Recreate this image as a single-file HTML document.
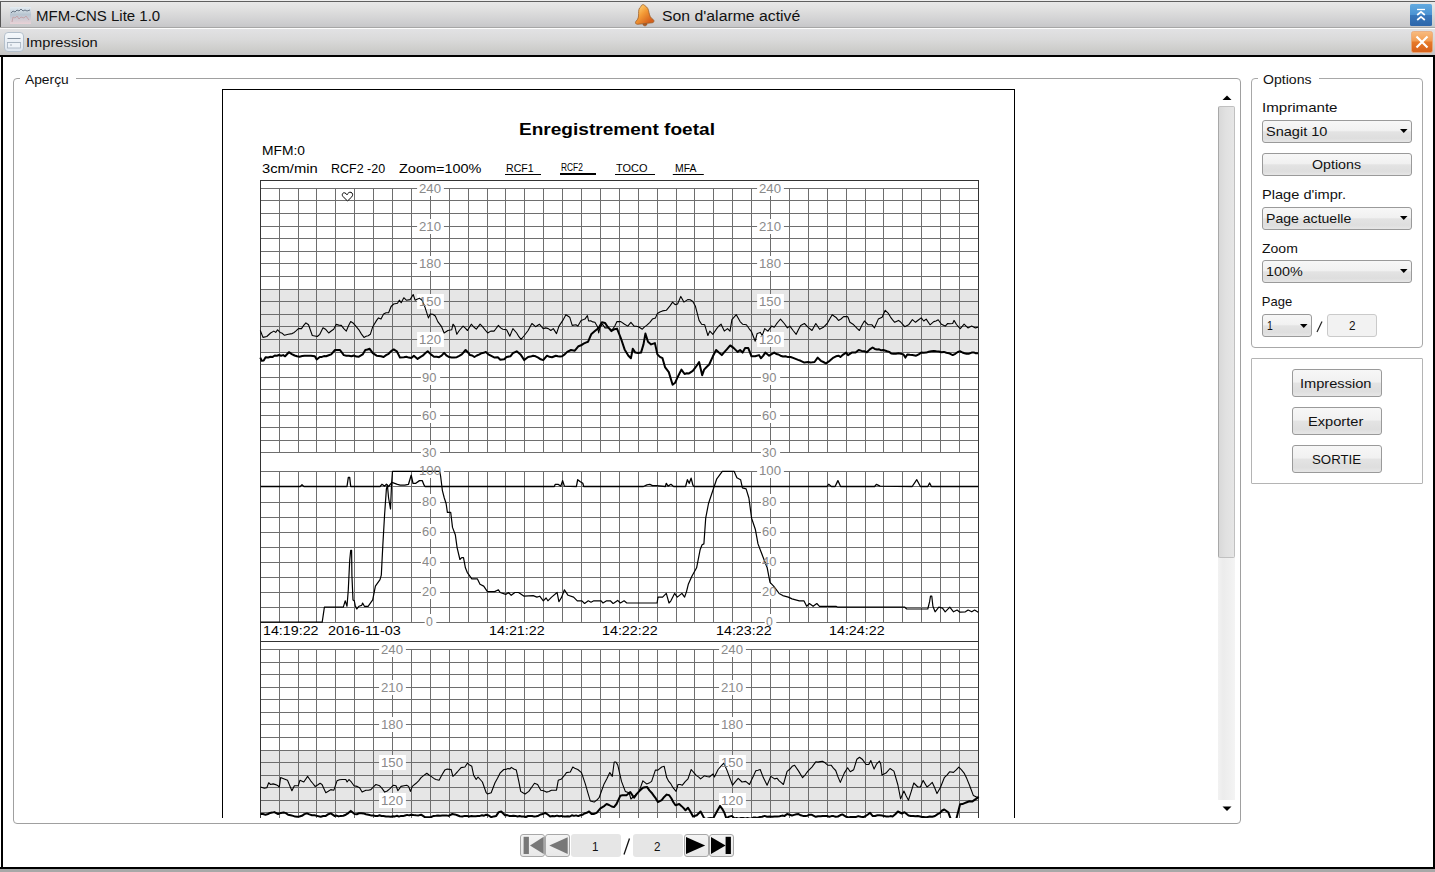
<!DOCTYPE html>
<html><head><meta charset="utf-8"><style>
html,body{margin:0;padding:0;width:1435px;height:872px;overflow:hidden;background:#fff;position:relative}
.t{position:absolute;white-space:nowrap;line-height:1;font-family:"Liberation Sans",sans-serif;transform-origin:0 0}
</style></head><body>
<div style="position:absolute;left:0;top:0;width:1435px;height:1px;background:#ededed"></div>
<div style="position:absolute;left:0;top:1px;width:1435px;height:1px;background:#5f5f5f"></div>
<div style="position:absolute;left:0;top:2px;width:1435px;height:25px;background:linear-gradient(#e8e8e8,#dedede 35%,#cdcdcf 85%,#c6c6c8)"></div>
<div style="position:absolute;left:0;top:27px;width:1435px;height:1px;background:#a6a6a6"></div>
<div style="position:absolute;left:0;top:2px;width:1px;height:25px;background:#555"></div>
<div style="position:absolute;left:0;top:28px;width:1435px;height:1px;background:#fcfcfc"></div>
<div style="position:absolute;left:0;top:29px;width:1435px;height:26px;background:linear-gradient(#e2e2e4,#dadada 40%,#cdcdcb 80%,#c4c4c6)"></div>
<div style="position:absolute;left:0;top:55px;width:1435px;height:2px;background:#000"></div>
<div style="position:absolute;left:1px;top:55px;width:2px;height:814px;background:#000"></div>
<div style="position:absolute;left:1433px;top:55px;width:2px;height:814px;background:#000"></div>
<div style="position:absolute;left:0;top:867px;width:1435px;height:2px;background:#000"></div>
<div style="position:absolute;left:0;top:869px;width:1435px;height:3px;background:#a8a8a8"></div>
<svg style="position:absolute;left:10px;top:7px" width="21" height="17" viewBox="0 0 21 17">
<defs><linearGradient id="ai" x1="0" y1="0" x2="0" y2="1"><stop offset="0" stop-color="#e4ecf2"/><stop offset="0.45" stop-color="#b7c4d0"/><stop offset="1" stop-color="#ead2d6"/></linearGradient></defs>
<rect x="0" y="0" width="21" height="17" fill="url(#ai)"/>
<path d="M1 6 L3 4 L5 5 L7 3 L9 4 L11 2 L13 4 L15 3 L17 4 L20 3" stroke="#6a7888" stroke-width="1" fill="none"/>
<path d="M2 15 L3 10 L5 11 L7 9 L9 12 L11 10 L14 11 L16 9 L19 13" stroke="#c4a4aa" stroke-width="1" fill="none"/>
</svg>
<div class="t" style="left:35.80px;top:9.15px;font-size:14.00px;font-weight:normal;color:#111;transform:scaleX(1.0716);">MFM-CNS Lite 1.0</div>
<svg style="position:absolute;left:632px;top:3px" width="24" height="25" viewBox="0 0 24 25">
<defs><linearGradient id="bg" x1="0.2" y1="0.1" x2="0.8" y2="0.9"><stop offset="0" stop-color="#ffd070"/><stop offset="0.45" stop-color="#f39a36"/><stop offset="1" stop-color="#d4601c"/></linearGradient></defs>
<g transform="rotate(-6 12 12)">
<path d="M12 1.6 C10.6 1.6 10 2.6 9.8 3.4 C7.6 4.4 7 7 6.8 10 C6.5 13.5 5.8 15.6 3.2 17.6 C2.2 18.6 2.8 20.6 4.6 20.6 L19.4 20.6 C21.2 20.6 21.8 18.6 20.8 17.6 C18.2 15.6 17.5 13.5 17.2 10 C17 7 16.4 4.4 14.2 3.4 C14 2.6 13.4 1.6 12 1.6 Z" fill="url(#bg)" stroke="#9a5a22" stroke-width="0.9" stroke-opacity="0.8"/>
<path d="M10 21 C10 23.5 14 23.5 14 21 Z" fill="#b85a20" stroke="#8a4a1a" stroke-width="0.6"/>
</g>
</svg>
<div class="t" style="left:661.70px;top:9.15px;font-size:14.00px;font-weight:normal;color:#111;transform:scaleX(1.1290);">Son d'alarme activé</div>
<svg style="position:absolute;left:1410px;top:4px" width="22" height="22" viewBox="0 0 22 22">
<defs><linearGradient id="bl" x1="0" y1="0" x2="0" y2="1"><stop offset="0" stop-color="#62aae0"/><stop offset="0.5" stop-color="#4a92d2"/><stop offset="0.5" stop-color="#3878bc"/><stop offset="1" stop-color="#2e66aa"/></linearGradient></defs>
<rect x="0" y="0" width="22" height="22" rx="1.5" fill="url(#bl)"/>
<path d="M7 5.5 L15 5.5" stroke="#fff" stroke-width="1.3"/>
<path d="M7.2 11 L11 7.8 L14.8 11" stroke="#fff" stroke-width="1.7" fill="none"/>
<path d="M7.2 16 L11 12.8 L14.8 16" stroke="#fff" stroke-width="1.7" fill="none"/>
</svg>
<svg style="position:absolute;left:4px;top:32px" width="20" height="20" viewBox="0 0 20 20">
<defs><linearGradient id="pi" x1="0" y1="0" x2="0" y2="1"><stop offset="0" stop-color="#f6f9fc"/><stop offset="1" stop-color="#dde5ee"/></linearGradient></defs>
<rect x="0.5" y="0.5" width="19" height="19" rx="3.5" fill="url(#pi)" stroke="#b4c0cc"/>
<path d="M3.5 6.5 L16.5 6.5 M3.5 10.5 L16.5 10.5" stroke="#8894a2" stroke-width="1"/>
<rect x="3.5" y="10.5" width="13" height="5.5" fill="#eef3f8" stroke="#a4b0be" stroke-width="0.8"/>
<circle cx="7" cy="13" r="0.7" fill="#8894a2"/>
</svg>
<div class="t" style="left:26.40px;top:36.00px;font-size:13.00px;font-weight:normal;color:#111;transform:scaleX(1.1274);">Impression</div>
<svg style="position:absolute;left:1411px;top:31px" width="22" height="22" viewBox="0 0 22 22">
<defs><linearGradient id="or" x1="0" y1="0" x2="0" y2="1"><stop offset="0" stop-color="#f8bc80"/><stop offset="0.45" stop-color="#f29c52"/><stop offset="0.5" stop-color="#e67a2a"/><stop offset="1" stop-color="#d6601a"/></linearGradient></defs>
<rect x="0.5" y="0.5" width="21" height="21" rx="2" fill="url(#or)" stroke="#eaa878" stroke-width="0.8"/>
<path d="M5.5 5.5 L16.5 16.5 M16.5 5.5 L5.5 16.5" stroke="#fff" stroke-width="2.2"/>
</svg>
<div style="position:absolute;left:13px;top:78px;width:1226px;height:744px;border:1px solid #a0a0a0;border-radius:4px"></div>
<div style="position:absolute;left:20px;top:74px;width:56px;height:10px;background:#fff"></div>
<div class="t" style="left:24.50px;top:73.00px;font-size:13.00px;font-weight:normal;color:#111;transform:scaleX(1.0607);">Aperçu</div>
<div style="position:absolute;left:1251px;top:78px;width:170px;height:268px;border:1px solid #a8a8a8;border-radius:4px"></div>
<div style="position:absolute;left:1258px;top:74px;width:61px;height:10px;background:#fff"></div>
<div class="t" style="left:1262.90px;top:73.00px;font-size:13.00px;font-weight:normal;color:#111;transform:scaleX(1.0826);">Options</div>
<div style="position:absolute;left:1251px;top:358px;width:170px;height:124px;border:1px solid #b4b4b4;border-radius:1px"></div>
<div class="t" style="left:1261.70px;top:101.00px;font-size:13.00px;font-weight:normal;color:#111;transform:scaleX(1.1615);">Imprimante</div>
<div style="position:absolute;left:1262px;top:120px;width:148px;height:21px;border:1px solid #9a9a9a;border-radius:3px;background:linear-gradient(#f7f7f7,#f1f1f1 45%,#e3e3e3 52%,#dedede 82%,#e6e6e6)"></div>
<svg style="position:absolute;left:1400.0px;top:129px" width="8" height="5"><path d="M0 0 L7.5 0 L3.75 4 Z" fill="#000"/></svg>
<div class="t" style="left:1265.60px;top:125.00px;font-size:13.00px;font-weight:normal;color:#111;transform:scaleX(1.1184);">Snagit 10</div>
<div style="position:absolute;left:1262px;top:153px;width:148px;height:21px;border:1px solid #9a9a9a;border-radius:3px;background:linear-gradient(#f7f7f7,#f1f1f1 45%,#e3e3e3 52%,#dedede 82%,#e6e6e6)"></div>
<div class="t" style="left:1311.70px;top:158.00px;font-size:13.00px;font-weight:normal;color:#111;transform:scaleX(1.0938);">Options</div>
<div class="t" style="left:1261.60px;top:188.00px;font-size:13.00px;font-weight:normal;color:#111;transform:scaleX(1.1232);">Plage d'impr.</div>
<div style="position:absolute;left:1262px;top:207px;width:148px;height:21px;border:1px solid #9a9a9a;border-radius:3px;background:linear-gradient(#f7f7f7,#f1f1f1 45%,#e3e3e3 52%,#dedede 82%,#e6e6e6)"></div>
<svg style="position:absolute;left:1400.0px;top:216px" width="8" height="5"><path d="M0 0 L7.5 0 L3.75 4 Z" fill="#000"/></svg>
<div class="t" style="left:1265.80px;top:212.00px;font-size:13.00px;font-weight:normal;color:#111;transform:scaleX(1.0825);">Page actuelle</div>
<div class="t" style="left:1261.80px;top:242.00px;font-size:13.00px;font-weight:normal;color:#111;transform:scaleX(1.0783);">Zoom</div>
<div style="position:absolute;left:1262px;top:260px;width:148px;height:21px;border:1px solid #9a9a9a;border-radius:3px;background:linear-gradient(#f7f7f7,#f1f1f1 45%,#e3e3e3 52%,#dedede 82%,#e6e6e6)"></div>
<svg style="position:absolute;left:1400.0px;top:269px" width="8" height="5"><path d="M0 0 L7.5 0 L3.75 4 Z" fill="#000"/></svg>
<div class="t" style="left:1266.30px;top:265.00px;font-size:13.00px;font-weight:normal;color:#111;transform:scaleX(1.1024);">100%</div>
<div class="t" style="left:1261.80px;top:295.00px;font-size:13.00px;font-weight:normal;color:#111;transform:scaleX(1.0000);">Page</div>
<div style="position:absolute;left:1262px;top:314px;width:48px;height:21px;border:1px solid #9a9a9a;border-radius:3px;background:linear-gradient(#f7f7f7,#f1f1f1 45%,#e3e3e3 52%,#dedede 82%,#e6e6e6)"></div>
<svg style="position:absolute;left:1300.0px;top:323.5px" width="8" height="5"><path d="M0 0 L7.5 0 L3.75 4 Z" fill="#000"/></svg>
<div class="t" style="left:1266.50px;top:319.00px;font-size:13.00px;font-weight:normal;color:#111;transform:scaleX(0.8056);">1</div>
<svg style="position:absolute;left:1314px;top:319px" width="10" height="15"><path d="M8 2.5 L3 13" stroke="#222" stroke-width="1.2"/></svg>
<div style="position:absolute;left:1327px;top:314px;width:48px;height:21px;border:1px solid #cacaca;border-radius:3px;background:#f2f2f2"></div>
<div class="t" style="left:1348.70px;top:319.00px;font-size:13.00px;font-weight:normal;color:#111;transform:scaleX(0.9028);">2</div>
<div style="position:absolute;left:1292px;top:369px;width:88px;height:26px;border:1px solid #9a9a9a;border-radius:3px;background:linear-gradient(#f7f7f7,#f1f1f1 45%,#e3e3e3 52%,#dedede 82%,#e6e6e6)"></div>
<div class="t" style="left:1300.20px;top:377.00px;font-size:13.00px;font-weight:normal;color:#111;transform:scaleX(1.1242);">Impression</div>
<div style="position:absolute;left:1292px;top:407px;width:88px;height:26px;border:1px solid #9a9a9a;border-radius:3px;background:linear-gradient(#f7f7f7,#f1f1f1 45%,#e3e3e3 52%,#dedede 82%,#e6e6e6)"></div>
<div class="t" style="left:1308.40px;top:415.00px;font-size:13.00px;font-weight:normal;color:#111;transform:scaleX(1.1263);">Exporter</div>
<div style="position:absolute;left:1292px;top:445px;width:88px;height:26px;border:1px solid #9a9a9a;border-radius:3px;background:linear-gradient(#f7f7f7,#f1f1f1 45%,#e3e3e3 52%,#dedede 82%,#e6e6e6)"></div>
<div class="t" style="left:1311.60px;top:453.00px;font-size:13.00px;font-weight:normal;color:#111;transform:scaleX(1.0207);">SORTIE</div>
<svg style="position:absolute;left:1222px;top:95px" width="10" height="6"><path d="M0.5 5 L9.5 5 L5 0.5 Z" fill="#000"/></svg>
<div style="position:absolute;left:1218px;top:557px;width:17px;height:243px;background:linear-gradient(90deg,#f2f2f2,#ececec 30%,#f0f0f0 70%,#f4f4f4)"></div>
<div style="position:absolute;left:1218px;top:106px;width:15px;height:450px;border:1px solid #c0c0c0;border-left-color:#a8a8a8;border-radius:2px;background:linear-gradient(90deg,#d8d8d8,#e0e0e0 40%,#e6e6e6)"></div>
<svg style="position:absolute;left:1222px;top:806px" width="10" height="6"><path d="M0.5 0.5 L9.5 0.5 L5 5 Z" fill="#000"/></svg>
<div style="position:absolute;left:520px;top:834px;width:23px;height:21px;border:1px solid #a8a8a8;border-radius:3px;background:linear-gradient(#f4f4f4,#e8e8e8)"></div>
<div style="position:absolute;left:545px;top:834px;width:23px;height:21px;border:1px solid #a8a8a8;border-radius:3px;background:linear-gradient(#f4f4f4,#e8e8e8)"></div>
<div style="position:absolute;left:684px;top:834px;width:23px;height:21px;border:1px solid #a8a8a8;border-radius:3px;background:linear-gradient(#f4f4f4,#e8e8e8)"></div>
<div style="position:absolute;left:709px;top:834px;width:23px;height:21px;border:1px solid #a8a8a8;border-radius:3px;background:linear-gradient(#f4f4f4,#e8e8e8)"></div>
<div style="position:absolute;left:571px;top:834px;width:50px;height:23px;border-radius:3px;background:#e6e6e6"></div>
<div style="position:absolute;left:633px;top:834px;width:50px;height:23px;border-radius:3px;background:#e6e6e6"></div>
<svg style="position:absolute;left:520px;top:834px" width="215" height="23" viewBox="520 834 215 23"><rect x="523.6" y="836.8" width="5.3" height="17.2" fill="#787878"/><path d="M543.7 836.8 L530 845.4 L543.7 854 Z" fill="#787878"/><path d="M567.7 837.3 L549.3 845.6 L567.7 854 Z" fill="#787878"/><path d="M686 837 L705.2 845.5 L686 854 Z" fill="#000"/><path d="M711 837 L725.6 845.5 L711 854 Z" fill="#000"/><rect x="725.6" y="836.8" width="5.3" height="17.2" fill="#000"/></svg>
<div class="t" style="left:591.50px;top:840.84px;font-size:12.00px;font-weight:normal;color:#111;transform:scaleX(0.9701);">1</div>
<svg style="position:absolute;left:620px;top:836px" width="14" height="20"><path d="M9.5 2.5 L4 18.5" stroke="#111" stroke-width="1.3"/></svg>
<div class="t" style="left:654.00px;top:840.84px;font-size:12.00px;font-weight:normal;color:#111;transform:scaleX(0.9701);">2</div>
<div style="position:absolute;left:222px;top:89px;width:791px;height:728px;border:1px solid #000;border-bottom:none;background:#fff"></div>
<div class="t" style="left:519.40px;top:121.03px;font-size:16.50px;font-weight:bold;color:#000;transform:scaleX(1.1551);">Enregistrement foetal</div>
<div class="t" style="left:261.70px;top:144.00px;font-size:13.00px;font-weight:normal;color:#000;transform:scaleX(1.0619);">MFM:0</div>
<div class="t" style="left:261.70px;top:162.00px;font-size:13.00px;font-weight:normal;color:#000;transform:scaleX(1.1324);">3cm/min</div>
<div class="t" style="left:330.70px;top:162.00px;font-size:13.00px;font-weight:normal;color:#000;transform:scaleX(0.9609);">RCF2 -20</div>
<div class="t" style="left:398.60px;top:162.00px;font-size:13.00px;font-weight:normal;color:#000;transform:scaleX(1.1134);">Zoom=100%</div>
<div class="t" style="left:505.50px;top:162.86px;font-size:10.80px;font-weight:normal;color:#000;transform:scaleX(0.9787);">RCF1</div>
<div class="t" style="left:560.70px;top:162.53px;font-size:10.00px;font-weight:normal;color:#000;transform:scaleX(0.8391);">RCF2</div>
<div class="t" style="left:615.90px;top:162.86px;font-size:10.80px;font-weight:normal;color:#000;transform:scaleX(1.0129);">TOCO</div>
<div class="t" style="left:674.60px;top:162.86px;font-size:10.80px;font-weight:normal;color:#000;transform:scaleX(0.9640);">MFA</div>
<svg style="position:absolute;left:0;top:0" width="1435" height="818" viewBox="0 0 1435 818">
<path d="M505 174.5 L541 174.5 M615 174.5 L655 174.5 M672.8 174.5 L703.8 174.5" stroke="#000" stroke-width="1"/>
<path d="M560 174 L596 174" stroke="#000" stroke-width="2"/>
<rect x="261" y="289.5" width="717" height="63.0" fill="#e6e6e6"/>
<rect x="261" y="750.5" width="717" height="62.0" fill="#e6e6e6"/>
<path d="M260 188.5 L978 188.5 M260 200.5 L978 200.5 M260 213.5 L978 213.5 M260 226.5 L978 226.5 M260 238.5 L978 238.5 M260 251.5 L978 251.5 M260 263.5 L978 263.5 M260 276.5 L978 276.5 M260 289.5 L978 289.5 M260 301.5 L978 301.5 M260 314.5 L978 314.5 M260 326.5 L978 326.5 M260 339.5 L978 339.5 M260 352.5 L978 352.5 M260 364.5 L978 364.5 M260 377.5 L978 377.5 M260 389.5 L978 389.5 M260 402.5 L978 402.5 M260 415.5 L978 415.5 M260 427.5 L978 427.5 M260 440.5 L978 440.5 M260 452.5 L978 452.5 M279.5 188.5 L279.5 452.5 M298.5 188.5 L298.5 452.5 M316.5 188.5 L316.5 452.5 M335.5 188.5 L335.5 452.5 M354.5 188.5 L354.5 452.5 M373.5 188.5 L373.5 452.5 M392.5 188.5 L392.5 452.5 M411.5 188.5 L411.5 452.5 M430.5 188.5 L430.5 452.5 M449.5 188.5 L449.5 452.5 M468.5 188.5 L468.5 452.5 M487.5 188.5 L487.5 452.5 M505.5 188.5 L505.5 452.5 M524.5 188.5 L524.5 452.5 M543.5 188.5 L543.5 452.5 M562.5 188.5 L562.5 452.5 M581.5 188.5 L581.5 452.5 M600.5 188.5 L600.5 452.5 M619.5 188.5 L619.5 452.5 M638.5 188.5 L638.5 452.5 M657.5 188.5 L657.5 452.5 M676.5 188.5 L676.5 452.5 M694.5 188.5 L694.5 452.5 M713.5 188.5 L713.5 452.5 M732.5 188.5 L732.5 452.5 M751.5 188.5 L751.5 452.5 M770.5 188.5 L770.5 452.5 M789.5 188.5 L789.5 452.5 M808.5 188.5 L808.5 452.5 M827.5 188.5 L827.5 452.5 M846.5 188.5 L846.5 452.5 M865.5 188.5 L865.5 452.5 M883.5 188.5 L883.5 452.5 M902.5 188.5 L902.5 452.5 M921.5 188.5 L921.5 452.5 M940.5 188.5 L940.5 452.5 M959.5 188.5 L959.5 452.5 M260 471.5 L978 471.5 M260 486.5 L978 486.5 M260 502.5 L978 502.5 M260 517.5 L978 517.5 M260 532.5 L978 532.5 M260 547.5 L978 547.5 M260 562.5 L978 562.5 M260 577.5 L978 577.5 M260 592.5 L978 592.5 M260 607.5 L978 607.5 M260 622.5 L978 622.5 M279.5 471.5 L279.5 622.5 M298.5 471.5 L298.5 622.5 M316.5 471.5 L316.5 622.5 M335.5 471.5 L335.5 622.5 M354.5 471.5 L354.5 622.5 M373.5 471.5 L373.5 622.5 M392.5 471.5 L392.5 622.5 M411.5 471.5 L411.5 622.5 M430.5 471.5 L430.5 622.5 M449.5 471.5 L449.5 622.5 M468.5 471.5 L468.5 622.5 M487.5 471.5 L487.5 622.5 M505.5 471.5 L505.5 622.5 M524.5 471.5 L524.5 622.5 M543.5 471.5 L543.5 622.5 M562.5 471.5 L562.5 622.5 M581.5 471.5 L581.5 622.5 M600.5 471.5 L600.5 622.5 M619.5 471.5 L619.5 622.5 M638.5 471.5 L638.5 622.5 M657.5 471.5 L657.5 622.5 M676.5 471.5 L676.5 622.5 M694.5 471.5 L694.5 622.5 M713.5 471.5 L713.5 622.5 M732.5 471.5 L732.5 622.5 M751.5 471.5 L751.5 622.5 M770.5 471.5 L770.5 622.5 M789.5 471.5 L789.5 622.5 M808.5 471.5 L808.5 622.5 M827.5 471.5 L827.5 622.5 M846.5 471.5 L846.5 622.5 M865.5 471.5 L865.5 622.5 M883.5 471.5 L883.5 622.5 M902.5 471.5 L902.5 622.5 M921.5 471.5 L921.5 622.5 M940.5 471.5 L940.5 622.5 M959.5 471.5 L959.5 622.5 M260 649.5 L978 649.5 M260 662.5 L978 662.5 M260 674.5 L978 674.5 M260 687.5 L978 687.5 M260 699.5 L978 699.5 M260 712.5 L978 712.5 M260 724.5 L978 724.5 M260 737.5 L978 737.5 M260 750.5 L978 750.5 M260 762.5 L978 762.5 M260 775.5 L978 775.5 M260 787.5 L978 787.5 M260 800.5 L978 800.5 M260 812.5 L978 812.5 M279.5 649.5 L279.5 818 M298.5 649.5 L298.5 818 M316.5 649.5 L316.5 818 M335.5 649.5 L335.5 818 M354.5 649.5 L354.5 818 M373.5 649.5 L373.5 818 M392.5 649.5 L392.5 818 M411.5 649.5 L411.5 818 M430.5 649.5 L430.5 818 M449.5 649.5 L449.5 818 M468.5 649.5 L468.5 818 M487.5 649.5 L487.5 818 M505.5 649.5 L505.5 818 M524.5 649.5 L524.5 818 M543.5 649.5 L543.5 818 M562.5 649.5 L562.5 818 M581.5 649.5 L581.5 818 M600.5 649.5 L600.5 818 M619.5 649.5 L619.5 818 M638.5 649.5 L638.5 818 M657.5 649.5 L657.5 818 M676.5 649.5 L676.5 818 M694.5 649.5 L694.5 818 M713.5 649.5 L713.5 818 M732.5 649.5 L732.5 818 M751.5 649.5 L751.5 818 M770.5 649.5 L770.5 818 M789.5 649.5 L789.5 818 M808.5 649.5 L808.5 818 M827.5 649.5 L827.5 818 M846.5 649.5 L846.5 818 M865.5 649.5 L865.5 818 M883.5 649.5 L883.5 818 M902.5 649.5 L902.5 818 M921.5 649.5 L921.5 818 M940.5 649.5 L940.5 818 M959.5 649.5 L959.5 818" stroke="#6e6e6e" stroke-width="1" fill="none"/>
<path d="M260.5 180 L260.5 818 M978.5 180 L978.5 818 M260 180.5 L979 180.5 M260 641.5 L979 641.5" stroke="#333" stroke-width="1" fill="none"/>
<rect x="417.1" y="181.0" width="26.8" height="15" fill="#fff"/>
<rect x="757.1" y="181.0" width="26.8" height="15" fill="#fff"/>
<rect x="417.1" y="219.0" width="26.8" height="15" fill="#fff"/>
<rect x="757.1" y="219.0" width="26.8" height="15" fill="#fff"/>
<rect x="417.1" y="256.0" width="26.8" height="15" fill="#fff"/>
<rect x="757.1" y="256.0" width="26.8" height="15" fill="#fff"/>
<rect x="417.1" y="294.0" width="26.8" height="15" fill="#fff"/>
<rect x="757.1" y="294.0" width="26.8" height="15" fill="#fff"/>
<rect x="417.1" y="332.0" width="26.8" height="15" fill="#fff"/>
<rect x="757.1" y="332.0" width="26.8" height="15" fill="#fff"/>
<rect x="420.9" y="370.0" width="19.2" height="15" fill="#fff"/>
<rect x="760.9" y="370.0" width="19.2" height="15" fill="#fff"/>
<rect x="420.9" y="408.0" width="19.2" height="15" fill="#fff"/>
<rect x="760.9" y="408.0" width="19.2" height="15" fill="#fff"/>
<rect x="420.9" y="445.0" width="19.2" height="15" fill="#fff"/>
<rect x="760.9" y="445.0" width="19.2" height="15" fill="#fff"/>
<rect x="417.1" y="463.0" width="26.8" height="15" fill="#fff"/>
<rect x="757.1" y="463.0" width="26.8" height="15" fill="#fff"/>
<rect x="420.9" y="494.0" width="19.2" height="15" fill="#fff"/>
<rect x="760.9" y="494.0" width="19.2" height="15" fill="#fff"/>
<rect x="420.9" y="524.0" width="19.2" height="15" fill="#fff"/>
<rect x="760.9" y="524.0" width="19.2" height="15" fill="#fff"/>
<rect x="420.9" y="554.0" width="19.2" height="15" fill="#fff"/>
<rect x="760.9" y="554.0" width="19.2" height="15" fill="#fff"/>
<rect x="420.9" y="584.0" width="19.2" height="15" fill="#fff"/>
<rect x="760.9" y="584.0" width="19.2" height="15" fill="#fff"/>
<rect x="424.7" y="614.0" width="11.6" height="15" fill="#fff"/>
<rect x="764.7" y="614.0" width="11.6" height="15" fill="#fff"/>
<rect x="379.1" y="642.0" width="26.8" height="15" fill="#fff"/>
<rect x="719.1" y="642.0" width="26.8" height="15" fill="#fff"/>
<rect x="379.1" y="680.0" width="26.8" height="15" fill="#fff"/>
<rect x="719.1" y="680.0" width="26.8" height="15" fill="#fff"/>
<rect x="379.1" y="717.0" width="26.8" height="15" fill="#fff"/>
<rect x="719.1" y="717.0" width="26.8" height="15" fill="#fff"/>
<rect x="379.1" y="755.0" width="26.8" height="15" fill="#fff"/>
<rect x="719.1" y="755.0" width="26.8" height="15" fill="#fff"/>
<rect x="379.1" y="793.0" width="26.8" height="15" fill="#fff"/>
<rect x="719.1" y="793.0" width="26.8" height="15" fill="#fff"/>
<path d="M260.3 330.5 L263.0 337.4 L266.8 336.5 L270.6 333.0 L273.8 331.1 L275.7 332.4 L277.6 329.8 L280.1 332.4 L282.3 333.3 L284.5 335.3 L288.3 334.3 L292.1 333.6 L294.2 332.4 L296.3 330.6 L298.4 328.6 L301.5 328.6 L303.7 325.4 L305.9 322.9 L308.5 324.8 L312.3 335.5 L314.8 336.0 L317.3 336.5 L319.8 334.3 L323.0 327.7 L325.5 329.2 L328.7 333.0 L331.2 331.0 L333.7 329.2 L336.2 324.4 L338.8 325.1 L341.3 325.4 L343.8 328.7 L346.3 331.1 L348.5 325.8 L350.7 321.6 L353.0 322.9 L355.2 325.4 L358.9 329.8 L361.5 334.1 L364.0 337.4 L366.1 336.3 L368.2 335.7 L370.3 334.3 L372.8 326.7 L376.6 320.4 L378.5 317.9 L381.0 319.1 L383.6 314.1 L386.1 312.8 L388.6 312.8 L391.1 306.5 L393.7 304.0 L397.5 303.3 L399.3 300.2 L401.2 302.7 L403.8 297.7 L406.3 300.2 L410.1 299.6 L413.2 294.5 L415.1 300.2 L417.6 298.9 L419.5 298.3 L422.1 300.2 L425.2 307.8 L428.4 317.9 L430.3 314.1 L432.8 314.3 L435.3 316.0 L437.8 321.6 L441.6 326.7 L444.1 333.0 L447.9 330.5 L451.7 329.8 L453.0 324.2 L454.9 326.7 L456.8 334.3 L459.3 330.5 L463.1 326.1 L465.3 328.2 L467.5 330.5 L471.3 324.2 L473.8 327.0 L476.3 329.2 L480.1 324.2 L482.3 326.3 L484.5 329.2 L487.7 333.0 L490.8 331.1 L494.0 331.1 L494.6 330.5 L498.4 325.4 L500.6 327.9 L502.8 329.2 L506.6 329.8 L509.8 336.2 L512.9 328.6 L516.7 333.0 L518.9 336.7 L521.1 339.3 L524.3 335.5 L528.1 330.5 L531.9 323.5 L535.6 326.7 L539.4 324.2 L543.2 328.6 L545.7 327.9 L548.3 328.6 L550.8 330.5 L553.3 328.6 L556.5 333.6 L559.0 326.1 L562.8 320.4 L565.9 314.7 L569.7 317.2 L572.2 325.4 L576.0 324.8 L577.9 326.1 L581.1 320.4 L584.9 319.1 L587.4 315.6 L588.6 321.0 L590.7 320.8 L592.8 321.9 L594.9 322.3 L597.5 326.7 L598.7 333.0 L600.0 327.3 L602.5 324.2 L605.0 327.9 L608.8 327.9 L612.0 330.5 L612.6 329.2 L614.8 326.0 L617.0 321.6 L620.8 321.6 L624.6 324.2 L627.8 326.1 L630.9 322.3 L634.1 326.1 L636.3 326.2 L638.5 326.7 L642.3 329.2 L644.5 326.9 L646.7 325.4 L649.9 322.3 L652.4 319.1 L655.5 317.9 L657.4 313.4 L659.9 312.1 L662.5 310.9 L666.3 310.3 L670.0 305.9 L672.6 302.1 L675.1 304.6 L677.6 304.0 L680.8 296.4 L683.9 302.1 L687.7 299.6 L690.2 299.8 L692.8 301.5 L695.3 305.9 L699.1 320.4 L701.6 324.2 L704.7 324.8 L707.9 335.5 L709.8 331.1 L712.9 334.3 L716.7 328.6 L718.9 326.0 L721.1 324.2 L724.3 331.1 L727.5 328.6 L730.0 331.1 L731.9 319.7 L734.1 317.1 L736.3 314.7 L740.1 321.6 L742.6 324.2 L746.4 324.8 L748.9 328.3 L751.5 331.7 L755.2 341.2 L757.1 333.6 L760.3 332.4 L762.2 335.5 L764.7 328.6 L767.9 331.1 L771.6 326.1 L774.2 327.3 L776.3 324.2 L778.4 321.5 L780.5 319.1 L784.3 323.5 L787.4 327.9 L789.9 326.1 L793.1 330.5 L796.2 334.3 L798.5 329.4 L800.7 325.4 L804.4 323.5 L808.2 327.3 L812.0 330.5 L815.8 323.5 L819.6 329.2 L823.4 327.3 L827.2 323.5 L829.7 319.1 L832.2 314.7 L834.3 316.3 L836.4 317.8 L838.5 320.4 L841.0 319.0 L843.6 316.6 L847.4 316.6 L848.0 317.2 L849.9 322.3 L853.0 324.2 L855.2 326.3 L857.3 328.6 L859.4 330.5 L861.9 325.3 L864.4 321.0 L868.2 324.8 L872.0 324.8 L874.5 327.9 L878.3 319.1 L882.1 317.2 L885.2 310.3 L888.4 313.4 L890.5 317.1 L892.6 319.8 L894.7 322.3 L898.5 320.4 L900.6 322.0 L902.7 324.4 L904.8 326.7 L908.6 324.8 L912.4 319.7 L915.5 322.3 L918.7 319.7 L921.2 317.9 L923.7 321.0 L926.2 319.1 L930.0 324.8 L933.8 321.6 L936.0 321.0 L938.2 319.7 L941.4 324.2 L945.2 326.1 L947.7 323.5 L950.2 323.8 L952.7 323.5 L954.0 320.4 L956.5 324.5 L959.0 327.3 L960.3 328.6 L964.1 324.2 L967.9 327.9 L971.7 326.1 L975.4 327.9 L978.0 327.3" stroke="#000" stroke-width="1.1" fill="none" stroke-linejoin="round"/>
<path d="M260.3 357.6 L261.8 360.8 L263.7 360.5 L265.6 357.2 L268.1 357.5 L270.6 356.7 L272.7 356.9 L274.8 355.5 L276.9 355.7 L279.0 355.0 L281.1 355.7 L283.2 355.1 L285.1 356.3 L288.9 352.2 L291.8 354.1 L294.6 355.5 L297.1 356.3 L299.6 356.7 L302.2 356.0 L304.7 355.7 L306.8 355.8 L308.9 355.8 L311.0 355.7 L314.8 356.3 L316.7 359.5 L319.8 357.0 L321.9 356.9 L324.0 356.1 L326.1 356.3 L328.7 355.3 L331.2 354.4 L335.0 350.0 L337.5 349.9 L340.0 350.0 L343.8 355.1 L346.3 355.7 L348.9 355.7 L351.4 356.2 L353.9 355.5 L356.4 356.6 L358.9 356.7 L362.7 354.4 L365.3 350.0 L367.5 349.5 L369.7 348.8 L372.8 353.2 L376.6 355.7 L378.8 356.0 L381.0 356.3 L383.6 357.0 L386.1 355.1 L388.6 353.8 L391.1 351.1 L393.7 349.4 L396.8 351.3 L400.0 357.6 L403.8 357.2 L406.3 356.8 L408.8 357.6 L411.3 358.0 L413.9 355.7 L417.6 358.9 L420.2 357.2 L422.7 355.7 L425.2 353.3 L427.7 351.3 L430.9 354.4 L434.0 356.7 L436.6 356.8 L439.1 357.2 L441.6 355.7 L444.1 352.9 L446.7 355.7 L449.2 357.1 L451.7 357.6 L454.2 357.4 L456.8 357.2 L459.3 355.9 L461.8 354.4 L465.6 350.0 L467.8 352.2 L470.0 355.1 L472.2 355.5 L474.4 357.0 L476.9 355.5 L479.5 354.4 L481.6 353.2 L483.7 352.8 L485.8 351.9 L488.3 354.4 L490.8 355.7 L494.6 357.6 L497.8 357.2 L500.3 359.7 L504.1 359.2 L506.6 357.0 L510.4 356.3 L512.9 353.2 L516.7 351.3 L520.5 354.4 L524.3 360.1 L528.1 357.0 L530.6 356.6 L533.1 355.7 L535.6 356.3 L538.2 357.6 L540.7 359.3 L543.2 360.1 L547.0 355.7 L549.5 356.8 L552.0 357.2 L555.8 355.7 L557.9 356.2 L560.0 356.6 L562.1 356.3 L564.7 354.4 L567.2 351.9 L571.0 350.0 L574.8 350.7 L578.5 346.2 L581.1 345.3 L583.6 343.7 L585.8 342.6 L588.0 341.8 L591.2 334.3 L594.9 331.1 L598.7 327.9 L601.9 322.3 L605.0 322.9 L607.6 326.7 L611.4 331.1 L612.0 330.5 L614.5 329.2 L617.0 328.6 L620.8 338.0 L624.6 349.4 L628.4 355.7 L630.9 358.2 L632.8 348.8 L635.3 352.6 L638.2 353.1 L641.0 352.6 L643.5 344.4 L645.4 333.6 L648.0 341.8 L651.1 344.4 L654.9 343.1 L657.4 354.4 L659.9 356.9 L662.5 358.2 L665.0 367.1 L668.8 372.1 L672.6 384.7 L675.1 382.8 L677.6 377.2 L681.4 369.6 L684.6 374.0 L686.8 373.3 L689.0 373.4 L692.8 370.9 L694.9 368.2 L697.0 365.2 L699.1 362.0 L702.2 375.3 L704.1 369.6 L706.6 367.0 L709.2 364.5 L712.9 356.3 L716.1 350.0 L718.9 352.6 L721.8 355.1 L724.3 352.2 L726.8 349.4 L730.0 345.6 L730.6 345.6 L733.8 348.1 L737.6 351.9 L740.1 350.0 L742.6 352.6 L745.1 348.1 L748.3 348.1 L751.5 356.3 L755.2 356.3 L759.0 355.1 L760.9 358.2 L763.1 355.9 L765.3 352.6 L769.1 355.7 L771.6 354.1 L774.2 352.6 L776.3 354.0 L778.4 354.5 L780.5 355.7 L783.0 356.5 L785.5 356.3 L788.0 357.1 L790.6 357.0 L793.1 357.9 L795.6 358.9 L798.1 359.9 L800.7 360.8 L804.4 362.6 L808.2 362.0 L810.3 362.5 L812.4 362.3 L814.5 362.0 L817.7 357.6 L820.9 360.8 L823.4 362.0 L825.9 363.3 L829.7 360.8 L833.5 357.6 L836.0 356.3 L838.5 355.7 L840.4 357.0 L843.2 354.6 L846.1 352.6 L848.0 355.1 L851.8 352.6 L855.6 352.6 L858.7 350.0 L861.6 350.9 L864.4 351.3 L866.9 352.2 L869.8 349.4 L872.6 347.5 L874.8 348.9 L877.0 349.4 L879.1 349.3 L881.2 350.3 L883.3 350.0 L887.1 351.3 L889.2 351.9 L891.3 353.5 L893.4 353.8 L895.9 353.7 L898.5 353.2 L901.0 353.8 L903.5 354.4 L905.4 357.6 L907.3 354.4 L909.8 354.8 L912.4 355.1 L916.1 355.7 L918.7 354.3 L921.2 352.6 L923.7 352.7 L926.2 352.6 L928.8 351.7 L931.3 351.3 L933.8 350.9 L936.3 351.3 L938.9 351.5 L941.4 352.2 L943.9 351.9 L946.4 352.7 L948.9 353.2 L952.7 355.1 L955.3 353.8 L957.8 352.0 L960.3 351.3 L962.4 352.5 L964.5 353.2 L966.6 353.8 L969.1 353.7 L971.7 352.6 L973.8 352.4 L975.9 353.3 L978.0 353.2" stroke="#000" stroke-width="2.0" fill="none" stroke-linejoin="round"/>
<path d="M260.8 622.2 L322.2 622.2 L324.4 607.2 L343.3 607.2 L345.2 600.8 L347.0 606.3 L348.3 589.8 L349.7 560.4 L350.7 550.3 L351.6 550.3 L351.9 575.1 L353.0 599.9 L354.3 600.8 L355.2 605.4 L356.7 609.0 L358.9 606.3 L361.7 605.4 L362.6 603.0 L364.4 606.3 L368.1 606.3 L372.7 599.9 L375.4 586.1 L380.0 579.7 L381.3 575.1 L382.8 545.7 L384.6 514.5 L386.4 488.9 L387.4 485.2 L388.6 498.0 L390.5 509.0 L391.6 483.3 L392.5 471.4 L439.7 471.4 L440.6 476.0 L442.4 490.7 L444.3 498.0 L446.1 503.5 L447.4 512.3 L450.7 512.3 L452.5 527.4 L455.3 534.7 L457.1 547.6 L459.9 559.5 L461.7 557.7 L463.5 557.7 L465.4 567.8 L467.2 572.3 L471.8 578.8 L477.3 578.8 L480.0 584.3 L483.7 586.1 L487.4 591.6 L491.0 591.6 L494.7 591.6 L498.4 589.8 L500.2 592.5 L505.7 594.4 L508.5 592.5 L511.2 595.3 L514.9 592.5 L518.6 592.5 L524.1 596.2 L533.2 595.6 L536.9 597.1 L539.7 596.2 L543.3 600.8 L546.1 598.0 L547.9 600.8 L551.6 597.1 L557.1 592.5 L558.9 601.7 L561.7 597.1 L564.4 589.8 L568.1 595.3 L573.6 597.1 L577.3 600.8 L581.9 600.8 L584.6 603.5 L588.3 600.8 L591.0 602.2 L593.8 600.8 L601.1 600.8 L603.0 603.0 L606.6 600.8 L610.3 600.8 L613.1 603.5 L614.0 603.0 L617.7 600.4 L620.4 603.0 L624.1 600.8 L626.8 603.0 L657.1 603.0 L658.0 597.1 L662.6 597.1 L666.3 593.4 L669.0 603.0 L670.9 600.8 L674.6 593.4 L677.3 597.1 L681.9 593.4 L684.6 597.1 L686.5 591.6 L688.3 584.3 L692.0 576.0 L696.6 567.8 L700.2 549.4 L702.1 544.8 L703.9 543.9 L705.7 518.2 L708.5 503.5 L714.0 487.0 L716.8 478.8 L722.3 471.4 L734.2 471.4 L736.9 477.8 L740.6 479.7 L742.4 487.9 L746.1 488.9 L748.9 498.0 L751.6 518.2 L755.3 529.2 L758.0 543.9 L760.8 551.2 L765.4 563.2 L767.2 567.8 L770.0 582.4 L773.6 586.1 L779.1 593.4 L782.8 595.6 L788.3 597.1 L792.0 598.9 L799.3 600.8 L803.9 600.8 L806.7 606.3 L809.4 603.5 L813.1 606.3 L816.8 603.5 L819.5 606.3 L836.0 606.3 L837.9 607.2 L904.8 607.2 L906.7 609.0 L927.8 609.0 L929.6 601.7 L930.5 596.2 L931.8 596.2 L932.9 606.3 L935.1 611.8 L938.8 607.2 L942.5 608.1 L945.2 611.8 L949.8 607.2 L953.5 611.8 L957.1 610.0 L959.9 612.2 L965.4 611.8 L968.1 610.0 L971.8 611.8 L974.6 610.0 L978.2 612.2" stroke="#000" stroke-width="1.2" fill="none" stroke-linejoin="round"/>
<path d="M260.8 486.5 L300.2 486.5 L302.0 484.8 L303.9 486.5 L347.0 486.5 L348.3 477.5 L349.7 477.5 L350.7 486.5 L380.0 486.5 L381.9 484.3 L384.6 486.1 L386.4 484.3 L388.6 486.5 L391.9 482.4 L394.7 483.3 L397.4 484.3 L400.2 485.2 L404.8 485.2 L408.5 484.3 L411.2 475.1 L413.0 483.3 L415.8 483.3 L419.5 480.6 L422.2 480.6 L424.1 485.2 L425.0 486.5 L436.0 486.5 L554.3 486.5 L555.3 484.3 L558.0 484.3 L560.8 486.1 L562.6 480.6 L564.4 486.1 L576.4 486.5 L577.7 479.7 L580.0 481.5 L582.8 483.3 L583.7 486.5 L643.4 486.5 L647.0 484.8 L649.8 484.3 L652.5 485.6 L656.2 485.6 L665.4 486.5 L666.3 483.3 L668.1 486.1 L670.9 484.3 L673.6 486.5 L685.6 486.5 L687.4 479.7 L689.2 483.3 L691.1 478.2 L692.9 485.2 L693.8 486.5 L826.9 486.5 L828.7 484.3 L831.4 486.5 L835.1 486.5 L837.9 480.6 L840.6 486.5 L874.6 486.5 L876.4 484.3 L880.1 486.1 L912.2 486.5 L916.8 479.7 L920.4 486.5 L927.8 486.5 L929.6 483.0 L931.4 486.5 L978.2 486.5" stroke="#000" stroke-width="1.3" fill="none" stroke-linejoin="round"/>
<path d="M260.5 787.1 L264.3 788.3 L266.8 787.7 L268.7 782.7 L270.5 784.5 L273.1 783.9 L275.6 784.6 L278.1 785.8 L279.3 787.1 L280.6 777.6 L284.3 778.9 L287.5 780.2 L289.7 785.5 L291.9 790.8 L294.4 785.8 L298.2 785.8 L300.0 780.2 L303.8 782.0 L307.6 776.4 L310.7 780.8 L312.9 783.5 L315.1 786.4 L317.6 785.0 L320.1 783.3 L322.0 784.5 L325.8 792.7 L328.3 791.3 L330.8 789.6 L333.9 790.2 L337.0 780.8 L339.6 779.7 L342.1 779.5 L345.8 779.5 L347.1 782.0 L349.0 779.5 L351.5 782.2 L354.0 785.8 L357.1 786.4 L359.6 787.7 L362.1 792.1 L365.9 790.2 L368.4 790.2 L370.9 789.6 L373.4 786.8 L375.9 784.5 L379.7 785.8 L382.2 788.7 L384.7 792.1 L387.2 791.0 L389.7 788.9 L393.5 785.2 L396.0 785.8 L397.9 790.8 L401.0 786.4 L403.9 785.8 L406.7 785.2 L408.6 786.4 L410.4 791.4 L412.3 786.4 L416.1 783.3 L418.6 780.8 L421.1 777.6 L423.9 775.4 L426.8 773.2 L429.0 775.0 L431.1 776.4 L434.9 779.1 L436.0 779.5 L439.1 780.2 L442.0 774.8 L444.8 770.1 L447.3 769.1 L451.1 769.5 L452.9 776.4 L455.1 774.3 L457.3 772.0 L461.1 767.6 L464.9 767.0 L467.4 763.2 L469.6 765.1 L471.8 766.3 L473.6 775.1 L476.2 779.5 L478.0 777.0 L480.2 779.5 L482.4 782.0 L486.2 792.7 L487.4 794.0 L491.2 792.7 L495.0 782.7 L497.5 778.2 L500.0 773.2 L503.8 769.5 L505.8 769.4 L507.9 768.6 L510.0 768.9 L511.3 767.4 L513.8 769.0 L516.3 770.1 L518.8 781.4 L520.7 791.4 L522.9 792.8 L525.1 794.0 L528.8 791.4 L531.7 787.2 L534.5 783.3 L537.6 784.5 L540.8 790.2 L543.6 790.7 L546.4 792.1 L548.9 791.5 L551.4 790.2 L553.9 790.2 L556.5 790.2 L558.3 780.2 L561.5 778.9 L564.0 776.0 L566.5 772.6 L570.3 772.0 L572.8 767.0 L575.3 768.6 L577.8 769.5 L581.5 772.6 L585.3 783.9 L587.8 792.6 L590.3 800.9 L594.1 802.1 L596.6 800.3 L599.1 797.7 L601.6 790.7 L604.1 783.9 L607.0 778.6 L609.8 772.6 L612.3 776.4 L614.2 762.0 L615.9 762.0 L617.8 765.1 L621.5 781.4 L625.3 791.4 L629.1 792.7 L630.9 799.0 L633.1 797.0 L635.3 795.2 L639.1 791.4 L642.9 780.8 L646.6 783.9 L649.1 783.1 L651.6 781.4 L655.4 770.1 L657.9 770.1 L661.7 767.0 L664.2 766.3 L666.7 777.6 L668.8 781.4 L670.9 783.9 L673.0 787.7 L676.1 791.4 L678.0 784.5 L680.2 784.5 L682.4 785.2 L685.2 781.7 L688.0 778.9 L691.2 769.5 L694.3 773.2 L696.4 775.6 L698.5 776.9 L700.6 778.9 L704.3 775.8 L706.8 776.5 L709.4 777.0 L713.1 773.9 L714.4 777.0 L718.1 769.5 L721.0 766.1 L723.8 763.2 L726.9 770.1 L729.7 777.6 L732.6 785.2 L735.4 781.6 L738.2 778.3 L742.0 782.0 L745.7 781.4 L749.5 784.5 L751.6 779.8 L753.7 775.4 L755.8 770.7 L758.0 770.2 L760.2 769.5 L763.3 777.6 L767.1 785.2 L770.8 776.4 L774.6 778.9 L777.1 778.3 L779.2 780.8 L781.3 782.6 L783.4 784.5 L787.1 771.4 L789.7 769.3 L792.2 766.3 L794.6 765.2 L798.6 771.1 L802.6 777.7 L805.2 774.8 L807.9 771.1 L811.9 767.1 L815.8 761.8 L818.0 762.1 L820.2 761.6 L822.5 761.2 L825.1 762.8 L827.7 765.2 L831.1 765.2 L833.4 768.2 L835.7 770.5 L838.0 776.9 L840.3 782.4 L844.3 773.1 L847.6 767.8 L850.3 771.8 L853.6 769.8 L856.9 759.2 L859.5 757.2 L862.2 759.2 L866.1 764.5 L868.8 764.5 L870.8 760.5 L874.1 769.1 L876.7 763.8 L879.4 761.2 L880.7 763.8 L882.0 775.1 L886.0 773.1 L890.0 768.5 L893.9 771.1 L897.9 785.0 L900.6 798.9 L903.9 791.0 L906.2 796.0 L908.5 800.2 L911.2 791.7 L913.8 783.0 L917.8 787.0 L920.4 787.0 L923.1 780.4 L927.0 787.0 L929.7 784.9 L932.3 782.4 L934.7 787.7 L937.0 793.6 L940.3 787.7 L944.3 777.7 L946.9 775.1 L949.6 771.8 L953.5 772.4 L956.2 769.9 L958.8 767.1 L961.5 769.9 L964.1 773.1 L966.8 778.6 L969.4 785.0 L973.4 795.6 L977.4 797.6" stroke="#000" stroke-width="1.1" fill="none" stroke-linejoin="round"/>
<path d="M260.5 814.0 L263.0 814.0 L265.5 814.7 L268.0 814.0 L270.1 812.9 L272.2 812.6 L274.3 812.1 L278.1 814.0 L280.9 812.9 L283.7 812.5 L285.9 813.1 L288.1 814.7 L290.6 815.2 L293.1 815.9 L295.2 816.6 L297.3 816.7 L299.4 816.5 L301.9 815.8 L304.4 814.1 L306.9 813.4 L309.4 814.4 L312.0 815.3 L314.5 815.3 L317.0 815.9 L320.7 816.8 L323.2 816.0 L325.8 815.9 L328.3 814.2 L330.8 813.4 L334.5 815.9 L336.6 815.6 L338.7 816.4 L340.8 815.9 L343.3 815.7 L345.8 814.7 L348.3 813.1 L350.8 810.9 L354.6 814.0 L356.8 814.2 L359.0 813.3 L361.2 813.3 L363.4 813.4 L365.9 814.2 L368.4 814.7 L370.9 815.4 L373.4 815.5 L375.4 816.0 L377.4 816.1 L379.5 815.3 L381.5 816.0 L383.5 815.9 L386.0 816.4 L388.5 816.5 L391.0 816.8 L393.0 816.2 L395.0 816.4 L397.0 815.8 L399.0 816.6 L401.0 815.9 L403.0 816.1 L405.1 815.5 L407.1 814.9 L409.1 815.4 L411.1 814.7 L413.6 815.1 L416.1 815.3 L418.6 815.4 L421.1 814.7 L424.9 817.2 L428.6 817.2 L431.1 817.0 L433.7 815.9 L435.8 815.8 L438.0 815.6 L440.1 815.7 L442.3 815.5 L444.4 815.6 L446.5 815.4 L448.5 815.9 L452.3 814.0 L454.8 814.4 L457.3 815.3 L459.8 816.3 L462.3 816.5 L464.6 815.9 L466.9 815.9 L469.1 816.5 L471.4 816.1 L473.6 816.3 L475.7 816.2 L477.8 816.0 L479.9 815.9 L482.0 815.3 L484.1 815.7 L486.2 814.7 L488.7 815.5 L491.2 817.2 L493.7 816.4 L496.2 815.9 L498.7 812.1 L501.2 811.5 L505.0 815.3 L507.1 815.1 L509.2 815.9 L511.3 815.9 L513.4 815.7 L515.5 815.9 L517.6 816.5 L519.6 816.1 L521.7 816.5 L523.8 816.5 L525.9 817.0 L528.0 816.0 L530.1 815.9 L532.2 816.0 L534.3 816.6 L536.4 816.3 L538.5 815.7 L540.6 814.5 L542.6 814.0 L545.2 812.8 L547.7 814.5 L550.2 816.5 L552.4 816.0 L554.7 816.2 L557.0 815.6 L559.2 816.3 L561.5 815.9 L563.6 816.4 L565.7 816.5 L567.7 816.2 L569.8 816.5 L571.9 815.3 L574.0 815.9 L576.1 815.4 L578.2 816.1 L580.3 815.3 L582.4 814.8 L584.5 813.5 L586.6 812.8 L589.1 811.5 L591.6 814.0 L594.1 813.9 L596.6 812.8 L600.4 808.4 L602.5 807.1 L604.5 805.8 L606.6 804.0 L609.1 805.0 L611.7 806.5 L614.0 807.1 L616.5 804.0 L620.3 795.8 L622.4 795.3 L624.5 795.3 L626.5 795.2 L630.3 792.1 L634.1 797.7 L636.6 794.1 L639.1 791.4 L642.9 787.7 L645.1 787.2 L647.2 787.1 L649.4 790.4 L651.6 792.7 L653.7 795.6 L655.8 798.4 L657.9 802.1 L661.7 800.2 L664.2 796.9 L666.7 794.6 L669.2 795.2 L671.3 798.2 L673.4 802.2 L675.5 805.2 L679.2 804.0 L681.3 805.9 L683.4 807.9 L685.5 810.3 L688.0 807.8 L690.5 811.7 L693.0 816.5 L696.8 815.3 L700.6 811.5 L704.3 818.4 L706.5 819.0 L708.7 818.3 L710.9 818.1 L713.1 818.4 L716.9 811.5 L720.0 805.9 L722.2 808.8 L724.4 812.8 L726.3 818.4 L729.1 816.6 L731.9 815.9 L734.5 818.4 L736.6 818.0 L738.8 818.6 L740.9 818.0 L743.1 817.9 L745.2 818.4 L747.4 818.1 L749.5 818.4 L751.6 818.7 L753.7 817.4 L755.8 817.6 L757.9 817.7 L760.0 817.0 L762.1 816.8 L764.6 815.9 L767.1 816.8 L769.6 816.5 L772.1 816.8 L774.6 816.4 L777.1 816.5 L779.6 816.2 L782.1 815.6 L784.6 815.9 L787.1 814.0 L789.7 814.7 L792.0 815.5 L794.2 814.9 L796.4 814.3 L798.6 814.1 L800.8 815.3 L803.0 815.9 L805.2 816.1 L807.4 815.7 L809.7 814.7 L811.9 814.8 L815.8 816.8 L818.1 816.3 L820.5 816.2 L822.8 815.9 L825.1 816.1 L827.2 815.9 L829.3 816.8 L831.5 816.1 L833.6 816.1 L835.7 816.8 L837.9 816.5 L840.1 815.3 L842.3 814.4 L846.3 816.8 L848.5 817.5 L850.7 816.9 L852.9 817.1 L855.6 817.1 L858.2 816.1 L860.8 816.8 L863.5 817.1 L865.7 816.0 L867.9 814.5 L870.1 812.8 L872.8 816.1 L875.1 816.0 L877.4 815.3 L879.7 815.3 L882.0 815.5 L884.1 816.1 L886.3 816.4 L888.4 816.6 L890.5 816.1 L892.6 816.5 L895.3 814.2 L897.9 811.5 L901.9 813.5 L904.5 812.2 L908.5 815.5 L910.8 816.0 L913.1 816.0 L915.5 816.3 L917.8 816.1 L920.0 816.5 L922.2 816.9 L924.4 817.1 L927.0 817.2 L929.7 816.6 L932.3 816.8 L935.0 816.0 L937.6 814.1 L939.8 813.1 L942.1 810.5 L944.3 809.5 L948.2 812.2 L950.9 819.4 L953.5 820.0 L956.2 819.4 L960.1 804.2 L962.4 804.1 L964.6 803.1 L966.8 802.2 L969.4 801.3 L972.1 801.6 L976.0 798.9 L978.7 796.9" stroke="#000" stroke-width="2.0" fill="none" stroke-linejoin="round"/>
<path d="M392.5 471.5 L439.7 471.5 M722.3 471.5 L734.2 471.5" stroke="#000" stroke-width="1.2"/>
<path d="M347.5 201 L343 196.5 C341.5 195 342.5 192.5 344.5 192.8 C345.8 193 346.5 194 347 194.8 C347.8 193.2 349.2 191.8 351 192.3 C353 193 353 195.5 351.8 196.8 Z" stroke="#000" stroke-width="1" fill="#fff"/>
</svg>
<div class="t" style="left:418.50px;top:182.00px;font-size:13.00px;font-weight:normal;color:#8a8a8a;transform:scaleX(1.0138);">240</div>
<div class="t" style="left:758.50px;top:182.00px;font-size:13.00px;font-weight:normal;color:#8a8a8a;transform:scaleX(1.0138);">240</div>
<div class="t" style="left:418.50px;top:220.00px;font-size:13.00px;font-weight:normal;color:#8a8a8a;transform:scaleX(1.0138);">210</div>
<div class="t" style="left:758.50px;top:220.00px;font-size:13.00px;font-weight:normal;color:#8a8a8a;transform:scaleX(1.0138);">210</div>
<div class="t" style="left:418.50px;top:257.00px;font-size:13.00px;font-weight:normal;color:#8a8a8a;transform:scaleX(1.0138);">180</div>
<div class="t" style="left:758.50px;top:257.00px;font-size:13.00px;font-weight:normal;color:#8a8a8a;transform:scaleX(1.0138);">180</div>
<div class="t" style="left:418.50px;top:295.00px;font-size:13.00px;font-weight:normal;color:#8a8a8a;transform:scaleX(1.0138);">150</div>
<div class="t" style="left:758.50px;top:295.00px;font-size:13.00px;font-weight:normal;color:#8a8a8a;transform:scaleX(1.0138);">150</div>
<div class="t" style="left:418.50px;top:333.00px;font-size:13.00px;font-weight:normal;color:#8a8a8a;transform:scaleX(1.0138);">120</div>
<div class="t" style="left:758.50px;top:333.00px;font-size:13.00px;font-weight:normal;color:#8a8a8a;transform:scaleX(1.0138);">120</div>
<div class="t" style="left:422.30px;top:371.00px;font-size:13.00px;font-weight:normal;color:#8a8a8a;transform:scaleX(0.9931);">90</div>
<div class="t" style="left:762.30px;top:371.00px;font-size:13.00px;font-weight:normal;color:#8a8a8a;transform:scaleX(0.9931);">90</div>
<div class="t" style="left:422.30px;top:409.00px;font-size:13.00px;font-weight:normal;color:#8a8a8a;transform:scaleX(0.9931);">60</div>
<div class="t" style="left:762.30px;top:409.00px;font-size:13.00px;font-weight:normal;color:#8a8a8a;transform:scaleX(0.9931);">60</div>
<div class="t" style="left:422.30px;top:446.00px;font-size:13.00px;font-weight:normal;color:#8a8a8a;transform:scaleX(0.9931);">30</div>
<div class="t" style="left:762.30px;top:446.00px;font-size:13.00px;font-weight:normal;color:#8a8a8a;transform:scaleX(0.9931);">30</div>
<div class="t" style="left:418.50px;top:464.00px;font-size:13.00px;font-weight:normal;color:#8a8a8a;transform:scaleX(1.0138);">100</div>
<div class="t" style="left:758.50px;top:464.00px;font-size:13.00px;font-weight:normal;color:#8a8a8a;transform:scaleX(1.0138);">100</div>
<div class="t" style="left:422.30px;top:495.00px;font-size:13.00px;font-weight:normal;color:#8a8a8a;transform:scaleX(0.9931);">80</div>
<div class="t" style="left:762.30px;top:495.00px;font-size:13.00px;font-weight:normal;color:#8a8a8a;transform:scaleX(0.9931);">80</div>
<div class="t" style="left:422.30px;top:525.00px;font-size:13.00px;font-weight:normal;color:#8a8a8a;transform:scaleX(0.9931);">60</div>
<div class="t" style="left:762.30px;top:525.00px;font-size:13.00px;font-weight:normal;color:#8a8a8a;transform:scaleX(0.9931);">60</div>
<div class="t" style="left:422.30px;top:555.00px;font-size:13.00px;font-weight:normal;color:#8a8a8a;transform:scaleX(0.9931);">40</div>
<div class="t" style="left:762.30px;top:555.00px;font-size:13.00px;font-weight:normal;color:#8a8a8a;transform:scaleX(0.9931);">40</div>
<div class="t" style="left:422.30px;top:585.00px;font-size:13.00px;font-weight:normal;color:#8a8a8a;transform:scaleX(0.9931);">20</div>
<div class="t" style="left:762.30px;top:585.00px;font-size:13.00px;font-weight:normal;color:#8a8a8a;transform:scaleX(0.9931);">20</div>
<div class="t" style="left:426.10px;top:615.00px;font-size:13.00px;font-weight:normal;color:#8a8a8a;transform:scaleX(0.9444);">0</div>
<div class="t" style="left:766.10px;top:615.00px;font-size:13.00px;font-weight:normal;color:#8a8a8a;transform:scaleX(0.9444);">0</div>
<div class="t" style="left:380.50px;top:643.00px;font-size:13.00px;font-weight:normal;color:#8a8a8a;transform:scaleX(1.0138);">240</div>
<div class="t" style="left:720.50px;top:643.00px;font-size:13.00px;font-weight:normal;color:#8a8a8a;transform:scaleX(1.0138);">240</div>
<div class="t" style="left:380.50px;top:681.00px;font-size:13.00px;font-weight:normal;color:#8a8a8a;transform:scaleX(1.0138);">210</div>
<div class="t" style="left:720.50px;top:681.00px;font-size:13.00px;font-weight:normal;color:#8a8a8a;transform:scaleX(1.0138);">210</div>
<div class="t" style="left:380.50px;top:718.00px;font-size:13.00px;font-weight:normal;color:#8a8a8a;transform:scaleX(1.0138);">180</div>
<div class="t" style="left:720.50px;top:718.00px;font-size:13.00px;font-weight:normal;color:#8a8a8a;transform:scaleX(1.0138);">180</div>
<div class="t" style="left:380.50px;top:756.00px;font-size:13.00px;font-weight:normal;color:#8a8a8a;transform:scaleX(1.0138);">150</div>
<div class="t" style="left:720.50px;top:756.00px;font-size:13.00px;font-weight:normal;color:#8a8a8a;transform:scaleX(1.0138);">150</div>
<div class="t" style="left:380.50px;top:794.00px;font-size:13.00px;font-weight:normal;color:#8a8a8a;transform:scaleX(1.0138);">120</div>
<div class="t" style="left:720.50px;top:794.00px;font-size:13.00px;font-weight:normal;color:#8a8a8a;transform:scaleX(1.0138);">120</div>
<div class="t" style="left:262.60px;top:624.00px;font-size:13.00px;font-weight:normal;color:#000;transform:scaleX(1.0968);">14:19:22</div>
<div class="t" style="left:327.60px;top:624.00px;font-size:13.00px;font-weight:normal;color:#000;transform:scaleX(1.1099);">2016-11-03</div>
<div class="t" style="left:489.30px;top:624.00px;font-size:13.00px;font-weight:normal;color:#000;transform:scaleX(1.1008);">14:21:22</div>
<div class="t" style="left:602.40px;top:624.00px;font-size:13.00px;font-weight:normal;color:#000;transform:scaleX(1.0988);">14:22:22</div>
<div class="t" style="left:715.60px;top:624.00px;font-size:13.00px;font-weight:normal;color:#000;transform:scaleX(1.0988);">14:23:22</div>
<div class="t" style="left:828.90px;top:624.00px;font-size:13.00px;font-weight:normal;color:#000;transform:scaleX(1.0988);">14:24:22</div>
</body></html>
